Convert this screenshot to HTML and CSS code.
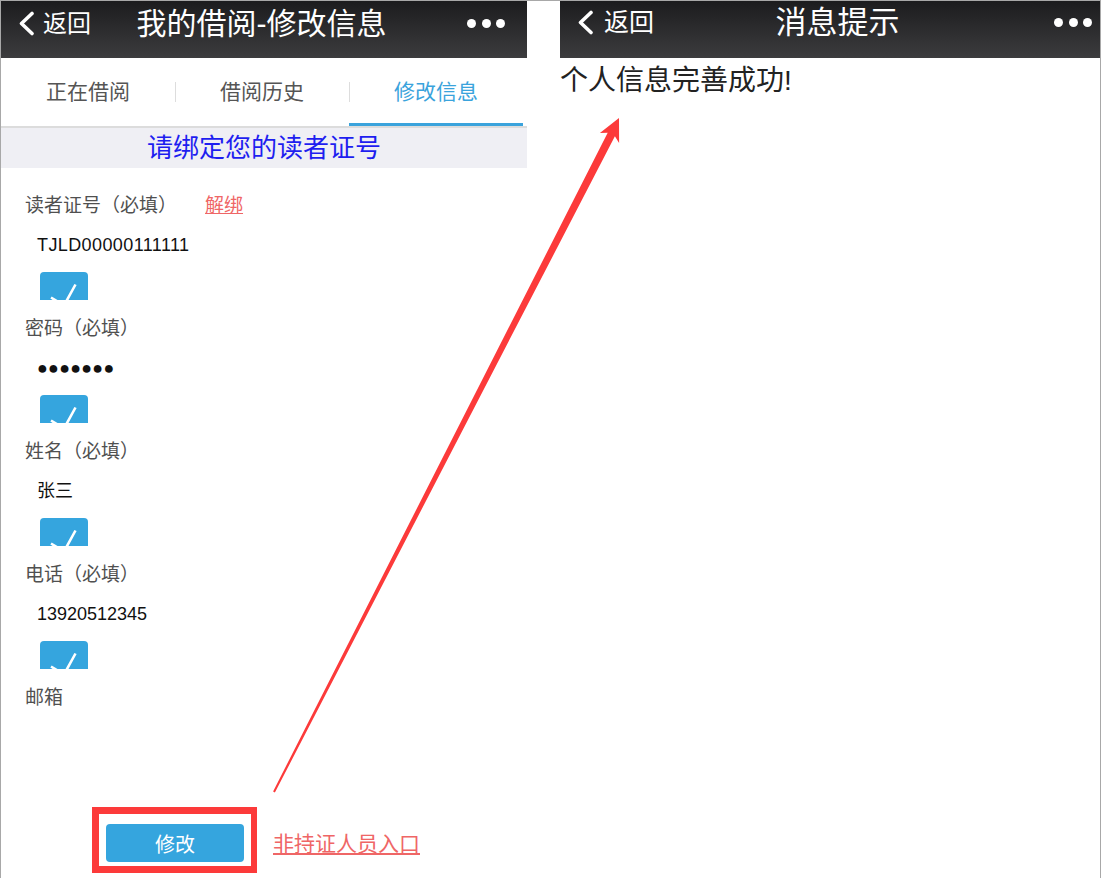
FILE: index.html
```html
<!DOCTYPE html>
<html lang="zh-CN">
<head>
    <meta charset="UTF-8">
    <meta name="viewport" content="width=device-width, initial-scale=1.0">
    <title>我的借阅-修改信息</title>
    <link rel="stylesheet" href="styles.css">
</head>
<body>

<div class="screen">

    <!-- 左侧：修改信息页面 -->
    <section class="panel panel-left">
        <header class="navbar">
            <a class="nav-back">
                <svg class="chevron" width="17" height="25" viewBox="0 0 17 25"><polyline points="14,2.5 3.5,12.5 14,22.5"/></svg>
                返回
            </a>
            <h1 class="nav-title">我的借阅-修改信息</h1>
            <span class="nav-more"><i></i><i></i><i></i></span>
        </header>

        <nav class="tabs">
            <a class="tab">正在借阅</a>
            <a class="tab">借阅历史</a>
            <a class="tab active">修改信息</a>
        </nav>

        <div class="notice">请绑定您的读者证号</div>

        <form class="bind-form">
            <div class="field">
                <div class="field-label">读者证号（必填）<a class="link-red unbind">解绑</a></div>
                <div class="field-value card-no">TJLD00000111111</div>
                <div class="check-box"><svg width="48" height="28" viewBox="0 0 48 28"><polyline points="11,25.5 24,33.5 35.5,12.5"/></svg></div>
            </div>
            <div class="field">
                <div class="field-label">密码（必填）</div>
                <div class="field-value password">●●●●●●●</div>
                <div class="check-box"><svg width="48" height="28" viewBox="0 0 48 28"><polyline points="11,25.5 24,33.5 35.5,12.5"/></svg></div>
            </div>
            <div class="field">
                <div class="field-label">姓名（必填）</div>
                <div class="field-value">张三</div>
                <div class="check-box"><svg width="48" height="28" viewBox="0 0 48 28"><polyline points="11,25.5 24,33.5 35.5,12.5"/></svg></div>
            </div>
            <div class="field">
                <div class="field-label">电话（必填）</div>
                <div class="field-value">13920512345</div>
                <div class="check-box"><svg width="48" height="28" viewBox="0 0 48 28"><polyline points="11,25.5 24,33.5 35.5,12.5"/></svg></div>
            </div>
            <div class="field">
                <div class="field-label">邮箱</div>
            </div>
        </form>

        <div class="actions">
            <div class="mark-frame">
                <button class="btn-submit" type="button">修改</button>
            </div>
            <a class="link-red link-entry">非持证人员入口</a>
        </div>
    </section>

    <!-- 右侧：消息提示页面 -->
    <section class="panel panel-right">
        <header class="navbar">
            <a class="nav-back">
                <svg class="chevron" width="17" height="25" viewBox="0 0 17 25"><polyline points="14,2.5 3.5,12.5 14,22.5"/></svg>
                返回
            </a>
            <h1 class="nav-title">消息提示</h1>
            <span class="nav-more"><i></i><i></i><i></i></span>
        </header>
        <p class="msg">个人信息完善成功!</p>
    </section>

</div>

<!-- 标注箭头 -->
<svg class="arrow" width="1102" height="878" viewBox="0 0 1102 878">
    <polygon points="273.1,791.5 274.9,792.5 614.9,136.3 619.1,142.9 619,118 599.9,133.1 607.7,132.7"/>
</svg>

</body>
</html>
```

FILE: styles.css
```css
body {
    margin: 0;
    padding: 0;
    background: #fff;
    font-family: "Liberation Sans", "Noto Sans CJK SC", sans-serif;
    color: #222;
}

.screen {
    position: relative;
    width: 1101px;
    height: 878px;
    box-sizing: border-box;
    border: 1px solid #a8a8a8;
    border-bottom: none;
    display: flex;
    gap: 33px;
}

.panel-left {
    width: 526px;
}

.panel-right {
    width: 540px;
}

/* 顶部导航 */
.navbar {
    height: 57px;
    box-sizing: border-box;
    background: linear-gradient(#1c1c1e, #3c3c3e);
    color: #fff;
    display: grid;
    grid-template-columns: 1fr auto 1fr;
    align-items: center;
    padding: 0 22px 12px 17px;
}

.panel-right .navbar {
    height: 57px;
    padding: 0 8px 15px 17px;
}

.nav-back {
    display: flex;
    align-items: center;
    gap: 8px;
    font-size: 24px;
    line-height: 1;
}

.panel-right .nav-back {
    gap: 10px;
    font-size: 25px;
}

.chevron polyline {
    fill: none;
    stroke: #fff;
    stroke-width: 3.6;
    stroke-linecap: round;
    stroke-linejoin: round;
}

.nav-title {
    margin: 0;
    font-size: 30px;
    font-weight: normal;
    line-height: 1;
}

.panel-right .nav-title {
    margin-left: 6px;
    font-size: 31px;
}

.nav-more {
    justify-self: end;
    display: flex;
    gap: 5.5px;
}

.nav-more i {
    width: 9px;
    height: 9px;
    border-radius: 50%;
    background: #fff;
}

/* 选项卡 */
.tabs {
    display: flex;
    height: 68px;
    padding-right: 4px;
    border-bottom: 2px solid #dcdcdc;
}

.tab {
    flex: 1;
    position: relative;
    text-align: center;
    font-size: 21px;
    line-height: 68px;
    color: #555;
}

.tab + .tab::before {
    content: "";
    position: absolute;
    left: 0;
    top: 24px;
    height: 20px;
    border-left: 1px solid #ddd;
}

.tab.active {
    color: #3aa3dc;
    box-shadow: inset 0 -3px 0 #3aa3dc;
}

.notice {
    height: 40px;
    line-height: 40px;
    background: #efeff4;
    color: #1e1ef0;
    font-size: 26px;
    text-align: center;
}

/* 表单 */
.bind-form {
    padding: 26px 0 0 24px;
}

.field {
    margin-bottom: 17px;
}

.field-label {
    font-size: 19px;
    line-height: 24px;
    color: #505050;
}

.link-red {
    color: #ef6666;
    text-decoration: underline;
}

.unbind {
    margin-left: 28px;
}

.field-value {
    margin: 15px 0 0 12px;
    font-size: 18px;
    line-height: 24px;
    color: #111;
}

.field-value.card-no {
    letter-spacing: 0.4px;
}

.field-value.password {
    letter-spacing: 0.2px;
}

.check-box {
    margin: 15px 0 0 15px;
    width: 48px;
    height: 28px;
    background: #35a5de;
    border-radius: 4px 4px 0 0;
    overflow: hidden;
}

.check-box svg {
    display: block;
}

.check-box polyline {
    fill: none;
    stroke: #fff;
    stroke-width: 2.6;
}

/* 底部按钮 */
.actions {
    display: flex;
    align-items: center;
    margin-top: 97px;
    padding-left: 91px;
}

.mark-frame {
    border: 7px solid #fc3a3a;
    border-right-width: 6px;
    padding: 10px 7px 4px 7px;
}

.btn-submit {
    display: block;
    width: 138px;
    height: 38px;
    border: none;
    border-radius: 4px;
    background: #35a5de;
    color: #fff;
    font-family: "Liberation Sans", "Noto Sans CJK SC", sans-serif;
    font-size: 20px;
    padding: 0;
}

.link-entry {
    margin: 3px 0 0 16px;
    font-size: 21px;
}

/* 右侧消息 */
.msg {
    margin: 5px 0 0 0;
    font-size: 28px;
    line-height: 36px;
    color: #222;
}

.arrow {
    position: absolute;
    top: 0;
    left: 0;
    pointer-events: none;
}

.arrow polygon {
    fill: #fc3a3a;
}
```
